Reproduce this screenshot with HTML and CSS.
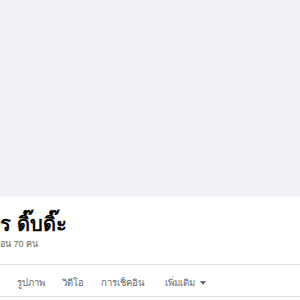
FILE: index.html
```html
<!DOCTYPE html>
<html lang="th">
<head>
    <meta charset="UTF-8">
    <meta name="viewport" content="width=device-width, initial-scale=1.0">
    <title>Profile</title>
    <link rel="stylesheet" href="styles.css">
</head>
<body>
    <div class="cover"></div>

    <div class="profile">
        <div class="info">
            <h1 class="name">ร ดิ๊บดิ๊ะ</h1>
            <div class="friends">อน 70 คน</div>
        </div>

        <div class="tabs">
            <span class="tab">รูปภาพ</span>
            <span class="tab">วิดีโอ</span>
            <span class="tab">การเช็คอิน</span>
            <span class="tab more">เพิ่มเติม <span class="caret"></span></span>
        </div>
    </div>
</body>
</html>
```

FILE: styles.css
```css
body {
    font-family: "Liberation Sans", "Noto Sans", sans-serif;
    margin: 0;
    padding: 0;
    background-color: #fff;
    overflow: hidden;
}

.cover {
    height: 196px;
    background-color: #f0f2f5;
    border-bottom: 1px solid #f7f8fa;
}

.info {
    padding: 15px 0 0 0;
    height: 67px;
    box-sizing: border-box;
}

.name {
    margin: 0;
    font-size: 20px;
    font-weight: bold;
    color: #050505;
    line-height: 25px;
}

.friends {
    font-size: 9px;
    color: #65676b;
    line-height: 14px;
}

.tabs {
    display: flex;
    gap: 17px;
    padding: 4px 0 0 17px;
    height: 33px;
    box-sizing: border-box;
    align-items: center;
    border-top: 1px solid #dddfe2;
    border-bottom: 1px solid #dddfe2;
    font-size: 9.5px;
    color: #65676b;
}

.more {
    margin-left: 4px;
}

.caret {
    display: inline-block;
    width: 0;
    height: 0;
    margin-left: 2px;
    vertical-align: middle;
    border-left: 3px solid transparent;
    border-right: 3px solid transparent;
    border-top: 4px solid #65676b;
}
```
